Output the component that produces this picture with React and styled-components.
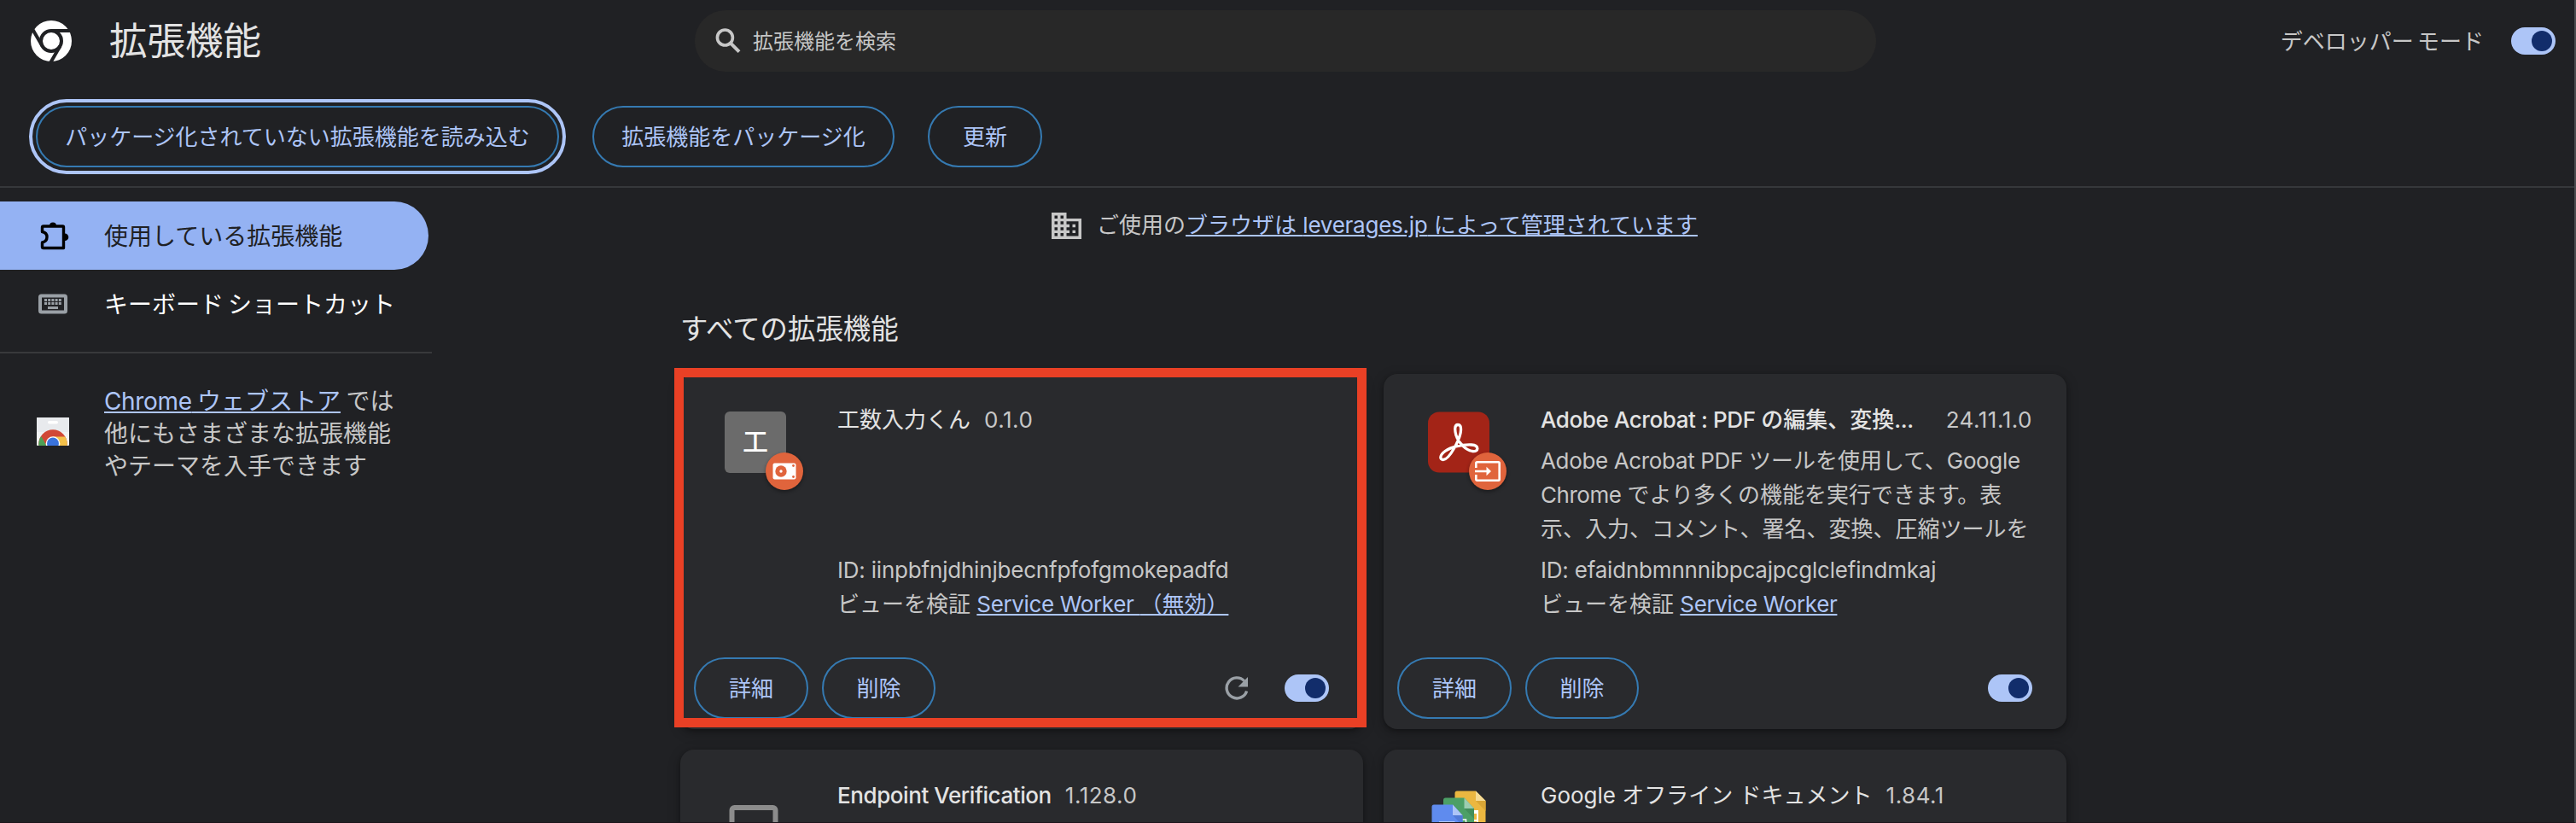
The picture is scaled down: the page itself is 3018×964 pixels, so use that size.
import React from "react";
import styled, { createGlobalStyle } from "styled-components";

const GlobalStyle = createGlobalStyle`
  * { box-sizing: border-box; }
  html, body { margin: 0; background: #202124; }
  body {
    font-family: "Inter", "Noto Sans CJK JP", sans-serif;
    font-size: 26px;
    color: #c7c7c7;
    overflow: hidden;
  }
`;

const Page = styled.div`
  width: 3018px;
  height: 964px;
  overflow: hidden;
  background: #202124;
  border-right: 2px solid #4b4c4f;
  border-bottom: 1px solid #1c151b;
`;

const Header = styled.header`
  display: flex;
  align-items: center;
  height: 96px;
  padding: 0 22px 0 36px;
`;

const Brand = styled.div`
  display: flex;
  align-items: center;
  gap: 44px;
  width: 778px;
`;

const Title = styled.h1`
  margin: 0;
  font-size: 44.5px;
  font-weight: 400;
  line-height: 60px;
  color: #e3e3e3;
`;

const SearchBox = styled.div`
  display: flex;
  align-items: center;
  gap: 14px;
  width: 1384px;
  height: 72px;
  padding-left: 24px;
  border-radius: 36px;
  background: #282828;
  font-size: 24px;
`;

const ControlText = styled.span`
  padding-bottom: 3px;
  word-spacing: -3px;
`;

const DevMode = styled.label`
  display: flex;
  align-items: center;
  gap: 32px;
  margin-left: auto;
  color: #c7c7c7;
`;

const Toggle = styled.span`
  display: flex;
  align-items: center;
  justify-content: flex-end;
  width: 52px;
  height: 32px;
  padding-right: 4px;
  border-radius: 16px;
  background: #adc5f7;

  &::after {
    content: "";
    width: 24px;
    height: 24px;
    border-radius: 50%;
    background: #122d6b;
  }
`;

const Toolbar = styled.div`
  display: flex;
  gap: 39px;
  height: 124px;
  padding: 28px 0 0 42px;
  border-bottom: 2px solid #36383b;
`;

const PillButton = styled.button`
  height: 72px;
  width: ${(p) => p.$width}px;
  padding: 0 0 3px;
  border: 2px solid #357ab2;
  border-radius: 36px;
  background: transparent;
  color: #adc5f7;
  font: inherit;
  white-space: nowrap;
  outline: ${(p) => (p.$focused ? "4px solid #adc5f7" : "none")};
  outline-offset: 4px;
`;

const Body = styled.div`
  display: flex;
`;

const Sidebar = styled.aside`
  width: 506px;
  padding-top: 16px;
  flex: none;
`;

const NavItem = styled.a`
  display: flex;
  align-items: center;
  gap: 39px;
  width: 502px;
  height: 80px;
  padding-left: 43px;
  border-radius: 0 40px 40px 0;
  font-size: 28px;
  background: ${(p) => (p.$active ? "#94b2f3" : "transparent")};
  color: ${(p) => (p.$active ? "#202124" : "#fff")};
  white-space: nowrap;
`;

const StorePromo = styled.div`
  display: flex;
  align-items: center;
  gap: 41px;
  margin-top: 16px;
  padding: 34px 0 0 43px;
  border-top: 2px solid #38393b;
  font-size: 28px;
  line-height: 38px;
  white-space: nowrap;
`;

const PromoText = styled.div`
  padding-top: 3px;
  margin-bottom: -3px;
  word-spacing: -1.5px;
`;

const Link = styled.a`
  color: #adc5f7;
  text-decoration: underline;
  text-decoration-thickness: 2px;
  text-underline-offset: 2px;
`;

const Latin = styled.span`
  letter-spacing: ${(p) => p.$spacing}px;
`;

const Main = styled.main`
  width: 1624px;
  margin-left: 291px;
`;

const ManagedNotice = styled.div`
  display: flex;
  align-items: center;
  gap: 18px;
  height: 88px;
  padding-left: 435px;
  line-height: 40px;
  white-space: nowrap;
`;

const SectionTitle = styled.h2`
  margin: 0;
  height: 130px;
  padding-top: 54px;
  font-size: 32.4px;
  font-weight: 400;
  line-height: 48px;
  color: #e3e3e3;
`;

const CardGrid = styled.div`
  display: grid;
  grid-template-columns: 800px 800px;
  gap: 24px;
`;

const Card = styled.section`
  position: relative;
  display: flex;
  flex-direction: column;
  justify-content: space-between;
  height: 416px;
  padding: 32px 40px 12px 16px;
  border-radius: 16px;
  background: #292a2d;
  box-shadow: 0 2px 4px rgba(0, 0, 0, 0.3), 0 4px 12px 4px rgba(0, 0, 0, 0.15);
`;

const CardTop = styled.div`
  display: flex;
  gap: 60px;
  padding-left: 36px;
`;

const IconWrap = styled.div`
  position: relative;
  flex: none;
  width: 72px;
  height: 72px;
  margin-top: 12px;
`;

const LetterIcon = styled.div`
  height: 72px;
  border-radius: 6px;
  background: #6b6b6b;
  color: #fff;
  font-size: 30px;
  font-weight: 500;
  line-height: 70px;
  text-align: center;
`;

const Badge = styled.span`
  position: absolute;
  left: 48px;
  top: 48px;
  display: flex;
  align-items: center;
  justify-content: center;
  width: 44px;
  height: 44px;
  border-radius: 50%;
  background: #e0643c;
  box-shadow: 0 2px 4px rgba(0, 0, 0, 0.4);
`;

const Info = styled.div`
  flex: 1;
  display: flex;
  flex-direction: column;
  padding-top: 2px;
  white-space: nowrap;
  line-height: 40px;
`;

const NameRow = styled.div`
  display: flex;
  justify-content: ${(p) => (p.$spread ? "space-between" : "flex-start")};
  gap: 16px;
`;

const Name = styled.span`
  color: #e3e3e3;
  font-weight: ${(p) => p.$weight || 400};
  letter-spacing: ${(p) => p.$spacing || 0}px;
`;

const Version = styled.span`
  letter-spacing: 0.5px;
`;

const Description = styled.div`
  height: 128px;
  margin-top: 8px;
`;

const Line = styled.div`
  height: 40px;
  letter-spacing: ${(p) => p.$spacing || 0}px;
`;

const Actions = styled.div`
  display: flex;
  align-items: center;
  gap: 16px;
`;

const ActionsEnd = styled.div`
  display: flex;
  align-items: center;
  gap: 42px;
  margin-left: auto;
`;

const Highlight = styled.div`
  position: absolute;
  left: -7px;
  top: -7px;
  width: 811px;
  height: 421px;
  border: 11px solid #e94025;
  pointer-events: none;
`;

const ChromeLogo = () => (
  <svg width="48" height="48" viewBox="0 0 48 48">
    <circle cx="24" cy="24" r="24" fill="#fff" />
    <circle cx="24" cy="24" r="12" fill="none" stroke="#202124" strokeWidth="4" />
    <g stroke="#202124" strokeWidth="4">
      <path d="M24 12H46" />
      <path d="M13.6 30L2.6 11" />
      <path d="M34.4 30L23.4 49" />
    </g>
  </svg>
);

const SearchIcon = () => (
  <svg width="30" height="30" viewBox="0 0 30 30" fill="none" stroke="#c7c7c7" strokeWidth="3.6">
    <circle cx="11.4" cy="11" r="9" />
    <path d="M18 17.6L28 27.6" strokeWidth="4" />
  </svg>
);

const PuzzleIcon = () => (
  <svg width="40" height="40" viewBox="0 0 40 40">
    <path
      d="M8 9H30.500Q31.500 9 31.500 10V34.500H8Q6.500 34.500 6.500 33V28Q12 27 12 21.600Q12 16.500 6.500 15.500V10.500Q6.500 9 8 9Z"
      fill="none"
      stroke="#000"
      strokeWidth="3.400"
      strokeLinejoin="round"
    />
    <path d="M15 8.500a4 4 0 0 1 8 0zM33 17.500a4.300 4.300 0 0 1 0 8.600z" fill="#000" />
  </svg>
);

const KeyboardIcon = () => (
  <svg width="40" height="40" viewBox="0 0 40 40">
    <rect x="4" y="10.500" width="30" height="19" rx="1.500" fill="none" stroke="#9aa0a6" strokeWidth="4" />
    {[9, 13.2, 17.4, 21.6, 25.8].map((x) => (
      <g key={x} fill="#9aa0a6">
        <rect x={x} y="14" width="3" height="3" />
        <rect x={x} y="18" width="3" height="3" />
      </g>
    ))}
    <rect x="13" y="23" width="12" height="3" fill="#9aa0a6" />
  </svg>
);

const WebStoreIcon = () => (
  <svg width="38" height="33" viewBox="0 0 38 33">
    <defs>
      <clipPath id="bag">
        <rect width="38" height="33" rx="1" />
      </clipPath>
    </defs>
    <g clipPath="url(#bag)">
      <rect width="38" height="33" fill="#f1f3f4" />
      <rect width="38" height="17" fill="#e8eaed" />
      <rect x="13" y="4" width="12" height="3.500" rx="1.750" fill="#fff" />
      <circle cx="19" cy="31" r="16.700" fill="#d14836" />
      <path d="M19 22.400H33.300A16.700 16.700 0 0 1 35.700 33H19Z" fill="#f3c04a" />
      <path d="M5.300 22L11.500 33H2.300A16.700 16.700 0 0 1 5.300 22Z" fill="#4f9f56" />
      <circle cx="19" cy="30.500" r="8.300" fill="#fff" />
      <circle cx="19" cy="30.500" r="6.900" fill="#3a73dc" />
    </g>
  </svg>
);

const BuildingIcon = () => (
  <svg width="35" height="31" viewBox="0 0 35 31">
    <path
      fillRule="evenodd"
      fill="#c7c7c7"
      d="M0 0H17.500V7H35V31H0ZM3.500 3.500V7H7V3.500ZM10.500 3.500V7H14V3.500ZM3.500 10.300V13.800H7V10.300ZM10.500 10.300V13.800H14V10.300ZM3.500 17.200V20.700H7V17.200ZM10.500 17.200V20.700H14V17.200ZM3.500 24V27.500H7V24ZM10.500 24V27.500H14V24ZM17.500 10.300V13.800H21V17.200H17.500V20.700H21V24H17.500V27.500H31.500V10.300ZM24.500 13.800H28V17.200H24.500ZM24.500 20.700H28V24H24.500Z"
    />
  </svg>
);

const DriveBadgeIcon = () => (
  <svg width="28" height="20" viewBox="0 0 28 20">
    <rect x="0.500" y="0.500" width="27" height="19" rx="2" fill="#fff" />
    <circle cx="10" cy="10" r="6.700" fill="#e0643c" />
    <circle cx="10" cy="10" r="1.700" fill="#fff" />
    <circle cx="24.500" cy="3.500" r="1.400" fill="#e0643c" />
    <circle cx="24.500" cy="16.500" r="1.400" fill="#e0643c" />
  </svg>
);

const InputBadgeIcon = () => (
  <svg width="30" height="24" viewBox="0 0 30 24">
    <path
      d="M1.300 8V2.500Q1.300 1.300 2.500 1.300H27.500Q28.700 1.300 28.700 2.500V21.500Q28.700 22.700 27.500 22.700H2.500Q1.300 22.700 1.300 21.500V16"
      fill="none"
      stroke="#fff"
      strokeWidth="2.600"
    />
    <path d="M0 10.700H13.500V6.800L19 12L13.500 17.200V13.300H0Z" fill="#fff" />
  </svg>
);

const AcrobatIcon = () => (
  <svg width="72" height="72" viewBox="0 0 72 72">
    <rect width="72" height="71" y="0.500" rx="13" fill="#a32417" />
    <path
      d="M35 15.500C30.500 15.500 31.500 23 33 28C36 37 44 45 52 46.500C60 47.500 60 39.500 51 39C40 38.500 27 41.500 20 46.500C13 51.500 14 56.500 17.800 56.500C25 56.500 38 32 38.500 22C38.800 17 37.500 15.500 35 15.500Z"
      fill="none"
      stroke="#fff"
      strokeWidth="3.300"
    />
  </svg>
);

const LaptopIcon = () => (
  <svg width="72" height="72" viewBox="0 0 72 72">
    <rect x="8.500" y="24" width="51" height="36" rx="3" fill="none" stroke="#8c8c8c" strokeWidth="6" />
    <rect x="0" y="62" width="72" height="6" fill="#8c8c8c" />
  </svg>
);

const DocsIcon = () => (
  <svg width="72" height="72" viewBox="0 0 72 72">
    <path d="M34 4.500H56L67.500 16V60H31.500V7Q31.500 4.500 34 4.500Z" fill="#ebb740" />
    <path d="M56 16H67.500V28Z" fill="#d9a636" />
    <path d="M56 4.500L67.500 16H56Z" fill="#f6dc96" />
    <path d="M48 27H59V50H48Z" fill="#fff" />
    <path d="M50 31H57V38H50ZM50 40H57V47H50Z" fill="#ebb740" />
    <path d="M20.500 12.500H42.500L54 25V66H18V15Q18 12.500 20.500 12.500Z" fill="#4c9f66" />
    <path d="M42.500 25H54V37Z" fill="#438e5b" />
    <path d="M42.500 12.500L54 25H42.500Z" fill="#9ccdb0" />
    <path d="M34 38H44.500V56H34" fill="none" stroke="#fff" strokeWidth="1.500" />
    <path d="M7 20.500H29L40.500 33V72H4.500V23Q4.500 20.500 7 20.500Z" fill="#5f8bee" />
    <path d="M29 33H40.500V45Z" fill="#5179d6" />
    <path d="M29 20.500L40.500 33H29Z" fill="#adc4f7" />
    <path d="M13 40.500H31.500V43H13Z" fill="#fff" />
  </svg>
);

const RefreshIcon = () => (
  <svg width="28" height="28" viewBox="0 0 28 28">
    <path d="M22.800 5.600A12 12 0 1 0 25.600 17.400" fill="none" stroke="#9aa0a6" strokeWidth="3.400" />
    <path d="M27 1V12.500H15.500Z" fill="#9aa0a6" />
  </svg>
);

function CardActions({ reload }) {
  return (
    <Actions>
      <PillButton $width={134}>詳細</PillButton>
      <PillButton $width={133}>削除</PillButton>
      <ActionsEnd>
        {reload && <RefreshIcon />}
        <Toggle />
      </ActionsEnd>
    </Actions>
  );
}

export default function App() {
  return (
    <>
      <GlobalStyle />
      <Page>
        <Header>
          <Brand>
            <ChromeLogo />
            <Title>拡張機能</Title>
          </Brand>
          <SearchBox>
            <SearchIcon />
            <ControlText>拡張機能を検索</ControlText>
          </SearchBox>
          <DevMode>
            <ControlText>デベロッパー モード</ControlText>
            <Toggle />
          </DevMode>
        </Header>
        <Toolbar>
          <PillButton $width={613} $focused>
            パッケージ化されていない拡張機能を読み込む
          </PillButton>
          <PillButton $width={354}>拡張機能をパッケージ化</PillButton>
          <PillButton $width={134}>更新</PillButton>
        </Toolbar>
        <Body>
          <Sidebar>
            <NavItem $active>
              <PuzzleIcon />
              <ControlText>使用している拡張機能</ControlText>
            </NavItem>
            <NavItem>
              <KeyboardIcon />
              <ControlText>キーボード ショートカット</ControlText>
            </NavItem>
            <StorePromo>
              <WebStoreIcon />
              <PromoText>
                <Link>
                  <Latin $spacing={-0.35}>Chrome</Latin> ウェブストア
                </Link>{" "}
                では
                <br />
                他にもさまざまな拡張機能
                <br />
                やテーマを入手できます
              </PromoText>
            </StorePromo>
          </Sidebar>
          <Main>
            <ManagedNotice>
              <BuildingIcon />
              <span>
                ご使用の
                <Link>
                  ブラウザは <Latin $spacing={-0.25}>leverages.jp</Latin> によって管理されています
                </Link>
              </span>
            </ManagedNotice>
            <SectionTitle>すべての拡張機能</SectionTitle>
            <CardGrid>
              <Card>
                <CardTop>
                  <IconWrap>
                    <LetterIcon>工</LetterIcon>
                    <Badge>
                      <DriveBadgeIcon />
                    </Badge>
                  </IconWrap>
                  <Info>
                    <NameRow>
                      <Name>工数入力くん</Name>
                      <Version>0.1.0</Version>
                    </NameRow>
                    <Description />
                    <Line $spacing={-0.2}>ID: iinpbfnjdhinjbecnfpfofgmokepadfd</Line>
                    <Line>
                      ビューを検証{" "}
                      <Link>
                        <Latin $spacing={-0.35}>Service Worker </Latin>（無効）
                      </Link>
                    </Line>
                  </Info>
                </CardTop>
                <CardActions reload />
                <Highlight />
              </Card>
              <Card>
                <CardTop>
                  <IconWrap>
                    <AcrobatIcon />
                    <Badge>
                      <InputBadgeIcon />
                    </Badge>
                  </IconWrap>
                  <Info>
                    <NameRow $spread>
                      <Name $weight={500}>
                        <Latin $spacing={-0.4}>Adobe Acrobat : PDF </Latin>の編集、変換
                        <Latin $spacing={-0.4}>...</Latin>
                      </Name>
                      <Version>24.11.1.0</Version>
                    </NameRow>
                    <Description>
                      <Latin $spacing={-0.35}>Adobe Acrobat PDF </Latin>ツールを使用して、
                      <Latin $spacing={-0.35}>Google</Latin>
                      <br />
                      <Latin $spacing={-0.45}>Chrome </Latin>でより多くの機能を実行できます。表
                      <br />
                      示、入力、コメント、署名、変換、圧縮ツールを
                    </Description>
                    <Line $spacing={-0.2}>ID: efaidnbmnnnibpcajpcglclefindmkaj</Line>
                    <Line>
                      ビューを検証{" "}
                      <Link>
                        <Latin $spacing={-0.35}>Service Worker</Latin>
                      </Link>
                    </Line>
                  </Info>
                </CardTop>
                <CardActions />
              </Card>
              <Card>
                <CardTop>
                  <IconWrap>
                    <LaptopIcon />
                  </IconWrap>
                  <Info>
                    <NameRow>
                      <Name $weight={500} $spacing={-0.42}>
                        Endpoint Verification
                      </Name>
                      <Version>1.128.0</Version>
                    </NameRow>
                  </Info>
                </CardTop>
              </Card>
              <Card>
                <CardTop>
                  <IconWrap>
                    <DocsIcon />
                  </IconWrap>
                  <Info>
                    <NameRow>
                      <Name>Google オフライン ドキュメント</Name>
                      <Version>1.84.1</Version>
                    </NameRow>
                  </Info>
                </CardTop>
              </Card>
            </CardGrid>
          </Main>
        </Body>
      </Page>
    </>
  );
}
